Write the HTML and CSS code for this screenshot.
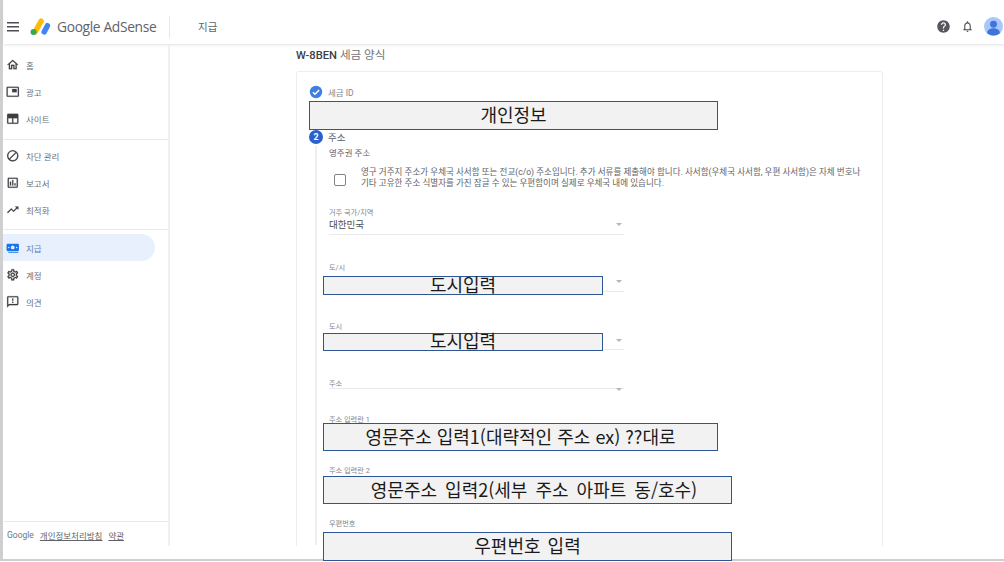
FILE: index.html
```html
<!DOCTYPE html>
<html lang="ko">
<head>
<meta charset="utf-8">
<title>Google AdSense - 지급</title>
<link rel="stylesheet" href="styles.css">
</head>
<body>
<div class="window">
  <header class="topbar">
    <svg class="menu-icon" viewBox="0 0 12 10"><path d="M0 0h12v1.4H0zM0 4h12v1.4H0zM0 8h12v1.4H0z"/></svg>
    <svg class="logo" viewBox="0 0 20 17"><path class="logo-y" d="M10.5 3 5 13"/><path class="logo-b" d="M16.6 7.2 13.5 13.2"/><circle class="logo-g" cx="3.4" cy="13.2" r="2.9"/></svg>
    <span class="brand">Google AdSense</span>
    <span class="top-divider"></span>
    <span class="page-name">지급</span>
    <span class="top-actions">
      <svg class="top-icon help" viewBox="0 0 24 24"><path d="M12 2C6.48 2 2 6.48 2 12s4.48 10 10 10 10-4.48 10-10S17.52 2 12 2zm1 17h-2v-2h2v2zm2.07-7.75l-.9.92C13.45 12.9 13 13.5 13 15h-2v-.5c0-1.1.45-2.1 1.17-2.83l1.24-1.26c.37-.36.59-.86.59-1.41 0-1.1-.9-2-2-2s-2 .9-2 2H8c0-2.21 1.79-4 4-4s4 1.79 4 4c0 .88-.36 1.68-.93 2.25z"/></svg>
      <svg class="top-icon bell" viewBox="0 0 24 24"><path d="M12 22c1.1 0 2-.9 2-2h-4c0 1.1.9 2 2 2zm6-6v-5c0-3.07-1.63-5.64-4.5-6.32V4c0-.83-.67-1.5-1.5-1.5s-1.5.67-1.5 1.5v.68C7.64 5.36 6 7.92 6 11v5l-2 2v1h16v-1l-2-2zm-2 1H8v-6c0-2.48 1.51-4.5 4-4.5s4 2.02 4 4.5v6z"/></svg>
      <svg class="avatar" viewBox="0 0 20 20"><circle class="avatar-bg" cx="10" cy="10" r="10"/><circle class="avatar-fg" cx="10" cy="7.6" r="3.6"/><path class="avatar-fg" d="M3.4 16.4c0-3 3.6-4.6 6.6-4.6s6.6 1.6 6.6 4.6v.6a10 10 0 0 1-13.2 0z"/></svg>
    </span>
  </header>
  <div class="workspace">
    <nav class="sidebar">
      <div class="nav-group first">
        <a class="nav-item"><svg class="nav-icon" viewBox="0 0 24 24"><path d="M12 5.69l5 4.5V18h-2v-6H9v6H7v-7.81l5-4.5M12 3L2 12h3v8h6v-6h2v6h6v-8h3L12 3z"/></svg>홈</a>
        <a class="nav-item"><svg class="nav-icon" viewBox="0 0 24 24"><path d="M19 7h-8v6h8V7zm2-4H3c-1.1 0-2 .9-2 2v14c0 1.1.9 1.98 2 1.98h18c1.1 0 2-.88 2-1.98V5c0-1.1-.9-2-2-2zm0 16.01H3V4.98h18v14.03z"/></svg>광고</a>
        <a class="nav-item"><svg class="nav-icon" viewBox="0 0 24 24"><path d="M20 3H4c-1.1 0-2 .9-2 2v14c0 1.1.9 2 2 2h16c1.1 0 2-.9 2-2V5c0-1.1-.9-2-2-2zM11 19H4v-8h7v8zm9 0h-7v-8h7v8z"/></svg>사이트</a>
      </div>
      <div class="nav-group second">
        <a class="nav-item"><svg class="nav-icon" viewBox="0 0 24 24"><path d="M12 2C6.48 2 2 6.48 2 12s4.48 10 10 10 10-4.48 10-10S17.52 2 12 2zM4 12c0-4.42 3.58-8 8-8 1.85 0 3.55.63 4.9 1.69L5.69 16.9C4.63 15.55 4 13.85 4 12zm8 8c-1.85 0-3.55-.63-4.9-1.69L18.31 7.1C19.37 8.45 20 10.15 20 12c0 4.42-3.58 8-8 8z"/></svg>차단 관리</a>
        <a class="nav-item"><svg class="nav-icon" viewBox="0 0 24 24"><path d="M19 3H5c-1.1 0-2 .9-2 2v14c0 1.1.9 2 2 2h14c1.1 0 2-.9 2-2V5c0-1.1-.9-2-2-2zm0 16H5V5h14v14zM7 10h2v7H7zm4-3h2v10h-2zm4 6h2v4h-2z"/></svg>보고서</a>
        <a class="nav-item"><svg class="nav-icon" viewBox="0 0 24 24"><path d="M16 6l2.29 2.29-4.88 4.88-4-4L2 16.59 3.41 18l6-6 4 4 6.3-6.29L22 12V6z"/></svg>최적화</a>
      </div>
      <div class="nav-group third">
        <a class="nav-item active"><svg class="nav-icon" viewBox="0 0 24 24"><path d="M3 5h18a2 2 0 0 1 2 2v9a2 2 0 0 1-2 2H3a2 2 0 0 1-2-2V7a2 2 0 0 1 2-2zm9 3.2a3.3 3.3 0 1 0 0 6.6 3.3 3.3 0 0 0 0-6.6zM5 10.2a1.3 1.3 0 1 0 0 2.6 1.3 1.3 0 0 0 0-2.6zm14 0a1.3 1.3 0 1 0 0 2.6 1.3 1.3 0 0 0 0-2.6zM4 19.5h18V21H4z"/></svg>지급</a>
        <a class="nav-item"><svg class="nav-icon" viewBox="0 0 24 24"><path d="M19.43 12.98c.04-.32.07-.64.07-.98s-.03-.66-.07-.98l2.11-1.65c.19-.15.24-.42.12-.64l-2-3.46c-.12-.22-.39-.3-.61-.22l-2.49 1c-.52-.4-1.08-.73-1.69-.98l-.38-2.65C14.46 2.18 14.25 2 14 2h-4c-.25 0-.46.18-.49.42l-.38 2.65c-.61.25-1.17.59-1.69.98l-2.49-1c-.23-.09-.49 0-.61.22l-2 3.46c-.13.22-.07.49.12.64l2.11 1.65c-.04.32-.07.65-.07.98s.03.66.07.98l-2.11 1.65c-.19.15-.24.42-.12.64l2 3.46c.12.22.39.3.61.22l2.49-1c.52.4 1.08.73 1.69.98l.38 2.65c.03.24.24.42.49.42h4c.25 0 .46-.18.49-.42l.38-2.65c.61-.25 1.17-.59 1.69-.98l2.49 1c.23.09.49 0 .61-.22l2-3.46c.12-.22.07-.49-.12-.64l-2.11-1.65zM17.45 11.27c.04.31.05.52.05.73 0 .21-.02.43-.05.73l-.14 1.13.89.7 1.08.84-.7 1.21-1.27-.51-1.04-.42-.9.68c-.43.32-.84.56-1.25.73l-1.06.43-.16 1.13-.2 1.35h-1.4l-.19-1.35-.16-1.13-1.06-.43c-.43-.18-.83-.41-1.23-.71l-.91-.7-1.06.43-1.27.51-.7-1.21 1.08-.84.89-.7-.14-1.13c-.03-.31-.05-.54-.05-.74s.02-.43.05-.73l.14-1.13-.89-.7-1.08-.84.7-1.21 1.27.51 1.04.42.9-.68c.43-.32.84-.56 1.25-.73l1.06-.43.16-1.13.2-1.35h1.39l.19 1.35.16 1.13 1.06.43c.43.18.83.41 1.23.71l.91.7 1.06-.43 1.27-.51.7 1.21-1.07.85-.89.7.14 1.13zM12 8c-2.21 0-4 1.79-4 4s1.79 4 4 4 4-1.79 4-4-1.79-4-4-4zm0 6c-1.1 0-2-.9-2-2s.9-2 2-2 2 .9 2 2-.9 2-2 2z"/></svg>계정</a>
        <a class="nav-item"><svg class="nav-icon" viewBox="0 0 24 24"><path d="M20 2H4c-1.1 0-1.99.9-1.99 2L2 22l4-4h14c1.1 0 2-.9 2-2V4c0-1.1-.9-2-2-2zm0 14H5.17L4 17.17V4h16v12zm-9-4h2v2h-2zm0-6h2v4h-2z"/></svg>의견</a>
      </div>
      <footer class="side-footer">
        <span class="side-google">Google</span>
        <a class="side-link">개인정보처리방침</a>
        <a class="side-link">약관</a>
      </footer>
    </nav>
    <main class="content">
      <h1 class="form-title"><b>W-8BEN</b> 세금 양식</h1>
      <section class="card">
        <div class="step done">
          <svg class="step-check" viewBox="0 0 14 14"><circle cx="7" cy="7" r="6.2"/><path d="M3.9 7.2 6 9.3l4.2-4.4"/></svg>
          <span class="step-label">세금 ID</span>
        </div>
        <div class="step current">
          <span class="step-num">2</span>
          <span class="step-label dark">주소</span>
        </div>
        <div class="step-body">
          <div class="sub-title">영주권 주소</div>
          <div class="check-row">
            <span class="checkbox"></span>
            <p class="check-text">영구 거주지 주소가 우체국 사서함 또는 전교(c/o) 주소입니다. 추가 서류를 제출해야 합니다. 사서함(우체국 사서함, 우편 사서함)은 자체 번호나<br>기타 고유한 주소 식별자를 가진 잠글 수 있는 우편함이며 실제로 우체국 내에 있습니다.</p>
          </div>
          <div class="field f1"><label>거주 국가/지역</label><div class="select"><span>대한민국</span><i class="caret"></i></div></div>
          <div class="field f2"><label>도/시</label><div class="select"><span></span><i class="caret"></i></div></div>
          <div class="field f3"><label>도시</label><div class="select"><span></span><i class="caret"></i></div></div>
          <div class="field f4"><label>주소</label><div class="select flat"><span></span><i class="caret"></i></div></div>
          <div class="field f5"><label>주소 입력란 1</label></div>
          <div class="field f6"><label>주소 입력란 2</label></div>
          <div class="field f7"><label>우편번호</label></div>
        </div>
      </section>
    </main>
  </div>
</div>
<div class="redact r1">개인정보</div>
<div class="redact r2">도시입력</div>
<div class="redact r3">도시입력</div>
<div class="redact r4">영문주소 입력1(대략적인 주소 ex) ??대로</div>
<div class="redact r5">영문주소 입력2(세부 주소 아파트 동/호수)</div>
<div class="redact r6">우편번호 입력</div>
</body>
</html>
```
FILE: styles.css
```css
* { box-sizing: border-box; }
html, body { margin: 0; padding: 0; height: 562px; overflow: hidden; background: #fff; }
body { position: relative; font-family: Roboto, "Noto Sans CJK KR", sans-serif; color: #5f6368; }

.window { height: 561px; border-left: 3px solid #cfcfcf; border-bottom: 2px solid #cfcfcf; padding-left: 1px; }

/* Top bar */
.topbar { height: 45px; display: flex; align-items: center; padding: 9px 1px 0 3px; border-bottom: 1px solid #ececec; box-shadow: 0 1px 2px rgba(0,0,0,.06); }
.menu-icon { width: 12px; height: 10px; fill: #4a4d51; flex: none; }
.logo { width: 21px; height: 18px; margin-left: 11px; flex: none; }
.logo-y { stroke: #fbbc04; stroke-width: 5.2; stroke-linecap: round; fill: none; }
.logo-b { stroke: #4285f4; stroke-width: 5.2; stroke-linecap: round; fill: none; }
.logo-g { fill: #34a853; }
.brand { margin-left: 6px; width: 100px; font-size: 13.8px; white-space: nowrap; color: #5f6368; font-family: "Open Sans", Roboto, sans-serif; letter-spacing: -.35px; }
.top-divider { width: 1px; height: 22px; background: #e6e6e6; margin: 0 0 0 12px; flex: none; }
.page-name { margin-left: 28px; font-size: 10.5px; color: #5f6368; }
.top-actions { margin-left: auto; display: flex; align-items: center; }
.top-icon { width: 15px; height: 15px; fill: #5f6368; }
.help { fill: #55585c; }
.bell { margin-left: 10px; width: 13px; height: 13px; fill: #4c4c4c; }
.avatar { width: 19px; height: 19px; margin-left: 10px; }
.avatar-bg { fill: #a8c7fa; }
.avatar-fg { fill: #3f74db; }

/* Sidebar */
.workspace { display: flex; height: 501px; }
.sidebar { width: 167px; flex: none; border-right: 2px solid #f0f0f0; margin-left: -1px; padding-left: 1px; display: flex; flex-direction: column; }
.nav-group { display: flex; flex-direction: column; border-bottom: 1px solid #e8e8e8; }
.nav-group.first { padding: 6.5px 0 6px; }
.nav-group.first .nav-item { height: 27px; }
.nav-group.second { padding: 2.5px 0 5.5px; }
.nav-group.third { padding-top: 3.5px; border-bottom: 0; flex: 1; }
.nav-item { height: 27.3px; display: flex; align-items: center; font-size: 8.5px; color: #6b6f73; padding-left: 3px; margin-right: 13px; border-radius: 0 14px 14px 0; margin-left: -1px; }
.nav-icon { width: 13.5px; height: 13.5px; fill: #3c3f42; stroke: #3c3f42; stroke-width: .3; margin-right: 6.5px; flex: none; }
.nav-item.active { background: #e8f0fe; color: #5f7fb0; }
.nav-item.active .nav-icon { fill: #1a73e8; stroke: none; }
.side-footer { height: 25px; border-top: 1px solid #e8e8e8; display: flex; align-items: center; gap: 6px; font-size: 8.5px; padding: 1px 0 0 3px; }
.side-google { color: #70757a; font-size: 8.5px; }
.side-link { color: #5f6368; text-decoration: underline; }

/* Main */
.content { flex: 1; padding-left: 126px; overflow: hidden; }
.form-title { margin: 0; height: 26px; font-size: 11.6px; line-height: 21px; font-weight: 400; color: #70757a; }
.form-title b { font-weight: 500; color: #3c4043; font-size: 11.2px; }
.card { width: 587px; height: 476px; border: 1px solid #eeeeee; border-bottom: 0; border-radius: 3px 3px 0 0; padding: 13px 0 0 12px; overflow: hidden; }
.step { display: flex; align-items: center; height: 14px; }
.step.current { margin-top: 30.5px; }
.step-check { width: 14px; height: 14px; flex: none; }
.step-check circle { fill: #3f7fe0; }
.step-check path { fill: none; stroke: #fff; stroke-width: 1.4; }
.step-num { width: 14px; height: 14px; border-radius: 50%; background: #2a5fd0; color: #fff; font-size: 9px; font-weight: 700; display: flex; align-items: center; justify-content: center; flex: none; }
.step-label { margin-left: 5px; font-size: 8.5px; color: #80868b; }
.step-label.dark { margin-left: 5px; font-size: 9.5px; color: #5f6368; }
.step-body { width: 565px; height: 399px; margin: 2px 0 0 6px; border-left: 2px solid #eeeeee; padding: 2px 0 0 12px; }
.sub-title { height: 10px; font-size: 8.5px; line-height: 10px; color: #5f6368; }
.check-row { display: flex; margin-top: 9px; }
.checkbox { width: 12px; height: 12px; margin: 7px 15px 0 5px; border: 1.5px solid #808488; border-radius: 2px; flex: none; }
.check-text { margin: 0; font-size: 8.55px; line-height: 11px; color: #5f6368; white-space: nowrap; }
.field { width: 295px; }
.field label { display: block; height: 10px; font-size: 7.2px; line-height: 10px; color: #80868b; }
.f1 { margin-top: 19px; }
.f2 { margin-top: 28px; }
.f3 { margin-top: 30px; }
.f4 { margin-top: 29px; }
.f5 { margin-top: 26px; }
.f6 { margin-top: 41px; }
.f7 { margin-top: 43px; }
.select { height: 17px; display: flex; align-items: center; justify-content: space-between; border-bottom: 1px solid #eaeaea; font-size: 9.5px; color: #4a4d51; padding-right: 2px; }
.f1 .select { padding-bottom: 3px; }
.f2 .select { height: 19px; }
.f3 .select { height: 18px; }
.select.flat { height: 2px; margin-top: -2px; align-items: flex-start; }
.caret { width: 0; height: 0; border-left: 3.5px solid transparent; border-right: 3.5px solid transparent; border-top: 3.5px solid #b4b6b9; flex: none; }
.flat .caret { margin-top: 1px; }

/* Annotations drawn over the screenshot */
.redact { position: absolute; background: #f2f2f2; border: 1px solid #2f5597; color: #1a1a1a; font-family: "Noto Sans CJK KR", sans-serif; font-size: 18px; display: flex; align-items: center; justify-content: center; white-space: nowrap; padding-bottom: 3px; }
.r1 { left: 309px; top: 101px; width: 409px; height: 29px; }
.r2 { left: 323px; top: 276px; width: 280px; height: 19px; }
.r3 { left: 323px; top: 333px; width: 280px; height: 18px; padding-bottom: 5px; }
.r4 { left: 323px; top: 423px; width: 395px; height: 28px; }
.r5 { left: 323px; top: 476px; width: 409px; height: 28px; word-spacing: 3px; padding-left: 13px; }
.r6 { left: 323px; top: 532px; width: 409px; height: 29px; word-spacing: 2px; }
```
